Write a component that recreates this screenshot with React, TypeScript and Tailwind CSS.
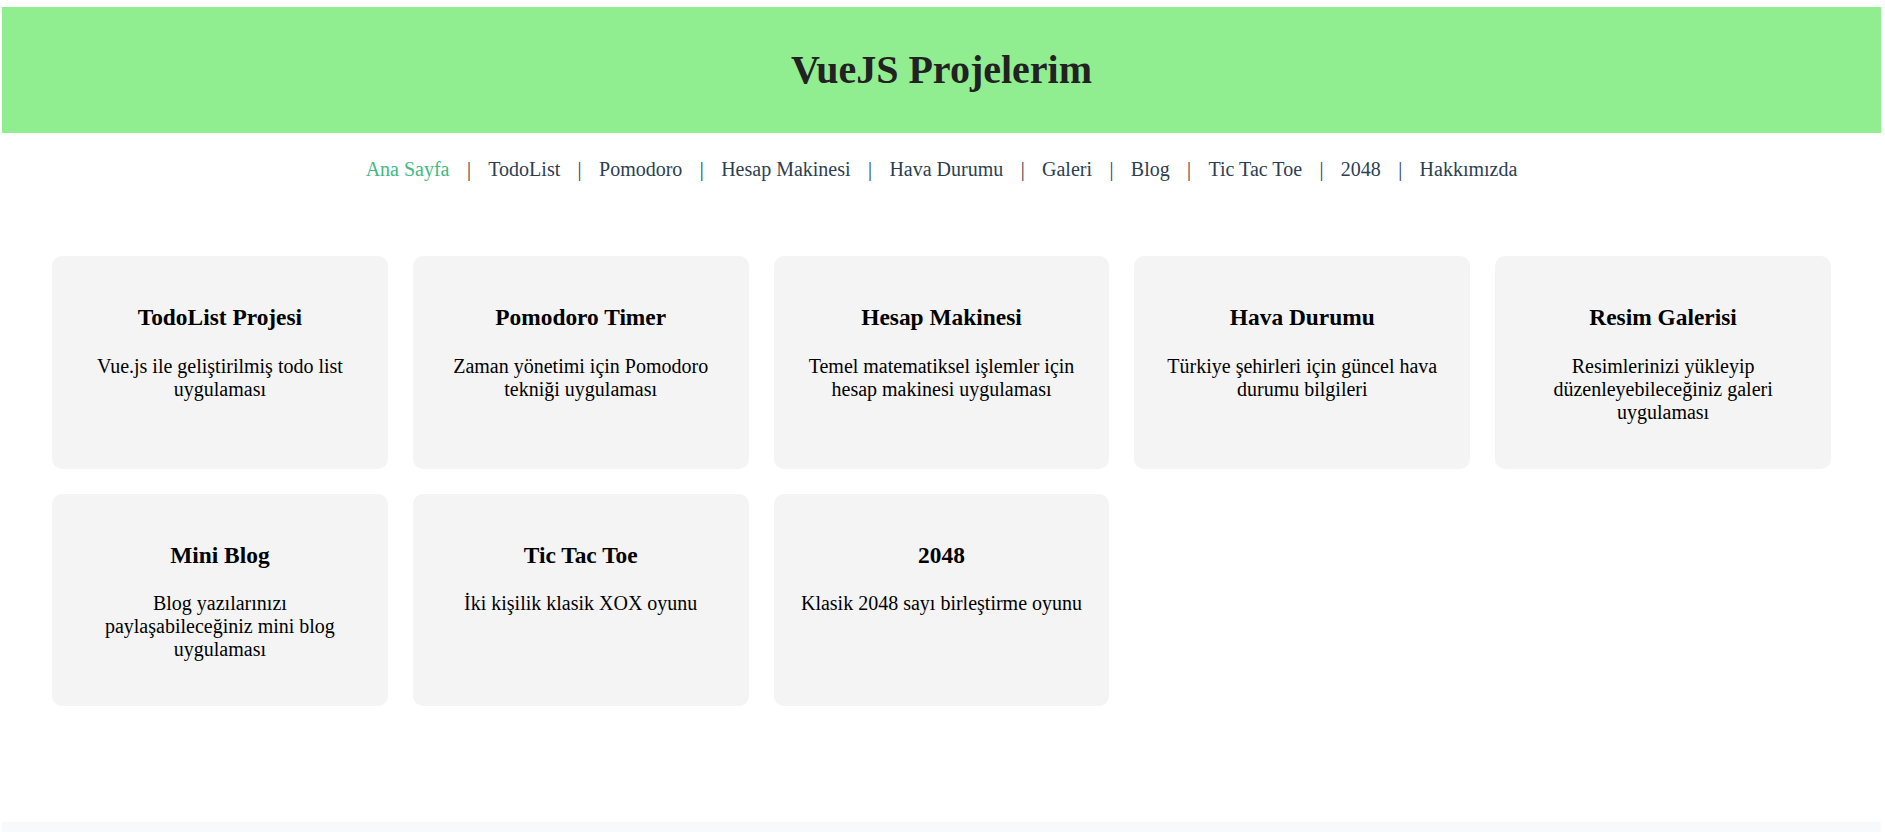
import React from "react"

interface Project {
  title: string
  description: string
}

const NAV_LINKS = [
  "Ana Sayfa",
  "TodoList",
  "Pomodoro",
  "Hesap Makinesi",
  "Hava Durumu",
  "Galeri",
  "Blog",
  "Tic Tac Toe",
  "2048",
  "Hakkımızda",
]

const PROJECTS: Project[] = [
  { title: "TodoList Projesi", description: "Vue.js ile geliştirilmiş todo list uygulaması" },
  { title: "Pomodoro Timer", description: "Zaman yönetimi için Pomodoro tekniği uygulaması" },
  { title: "Hesap Makinesi", description: "Temel matematiksel işlemler için hesap makinesi uygulaması" },
  { title: "Hava Durumu", description: "Türkiye şehirleri için güncel hava durumu bilgileri" },
  { title: "Resim Galerisi", description: "Resimlerinizi yükleyip düzenleyebileceğiniz galeri uygulaması" },
  { title: "Mini Blog", description: "Blog yazılarınızı paylaşabileceğiniz mini blog uygulaması" },
  { title: "Tic Tac Toe", description: "İki kişilik klasik XOX oyunu" },
  { title: "2048", description: "Klasik 2048 sayı birleştirme oyunu" },
]

function ProjectCard({ title, description }: Project) {
  return (
    <div className="block rounded-[10px] bg-[#f4f4f4] p-[25px] text-center text-black">
      <h3 className="my-[23.4px] text-[23.4px] font-bold leading-[1.15]">{title}</h3>
      <p className="my-[20px] text-[20px] leading-[1.15]">{description}</p>
    </div>
  )
}

export default function App() {
  return (
    <div
      className="flex min-h-[832px] flex-col bg-white pl-[2px] pr-[4px] pt-[7px]"
      style={{ fontFamily: '"Liberation Serif", "Times New Roman", serif' }}
    >
      <header className="flex h-[126px] items-center justify-center bg-[#90ee90]">
        <h1 className="text-[40px] font-bold leading-[1.15] text-[#222]">VueJS Projelerim</h1>
      </header>

      <nav className="flex items-center justify-center gap-[17.4px] pb-[25px] pt-[25px] text-[20px] leading-[23px]">
        {NAV_LINKS.map((label, i) => (
          <React.Fragment key={label}>
            {i > 0 && <span className="text-[#2c3e50]">|</span>}
            <a className={i === 0 ? "text-[#42b983]" : "text-[#2c3e50]"}>{label}</a>
          </React.Fragment>
        ))}
      </nav>

      <main className="grid grid-cols-5 gap-[25px] px-[50px] pt-[50px]">
        {PROJECTS.map((p) => (
          <ProjectCard key={p.title} {...p} />
        ))}
      </main>

      <footer className="mt-auto h-[10px] bg-[#f8f9fa]" />
    </div>
  )
}
